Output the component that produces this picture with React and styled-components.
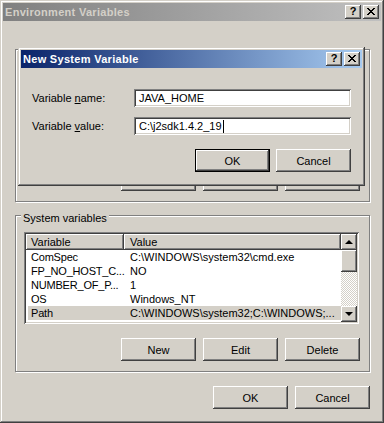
import React from "react";
import styled, { createGlobalStyle } from "styled-components";

const FONT = `"Liberation Sans", Arial, sans-serif`;
const FACE = "#d4d0c8";

const Global = createGlobalStyle`
  html, body { margin: 0; padding: 0; background: ${FACE}; }
  body { font-family: ${FONT}; font-size: 11px; color: #000; }
  * { box-sizing: border-box; }
`;

const raised = `box-shadow: inset -1px -1px #404040, inset 1px 1px #fff, inset -2px -2px #808080, inset 2px 2px ${FACE};`;
const sunken = `box-shadow: inset 1px 1px #808080, inset -1px -1px #fff, inset 2px 2px #404040, inset -2px -2px ${FACE};`;
const frame = `box-shadow: inset -1px -1px #404040, inset 1px 1px ${FACE}, inset -2px -2px #808080, inset 2px 2px #fff;`;

const Window = styled.div`
  position: relative;
  width: 384px;
  height: 423px;
  padding: 3px;
  background: ${FACE};
  ${frame}
  display: flex;
  flex-direction: column;
`;

const Dialog = styled.div`
  position: absolute;
  left: 18px;
  top: 47px;
  width: 347px;
  height: 139px;
  padding: 3px;
  background: ${FACE};
  ${frame}
  display: flex;
  flex-direction: column;
  z-index: 2;
`;

const TitleBar = styled.div`
  height: 18px;
  flex: none;
  display: flex;
  align-items: center;
  justify-content: space-between;
  padding: 0 2px 0 2px;
  background: ${(p) =>
    p.$active
      ? "linear-gradient(to right, #0a246a, #a6caf0)"
      : "linear-gradient(to right, #808080, #c0c0c0)"};
`;

const TitleText = styled.span`
  font-family: ${FONT};
  font-weight: bold;
  font-size: 11px;
  letter-spacing: 0.3px;
  color: ${(p) => (p.$active ? "#fff" : FACE)};
  white-space: nowrap;
`;

const CaptionGroup = styled.div`
  display: flex;
  gap: 2px;
`;

const CaptionBtn = styled.div`
  width: 16px;
  height: 14px;
  background: ${FACE};
  ${raised}
  display: flex;
  align-items: center;
  justify-content: center;
  font-family: ${FONT};
  font-weight: bold;
  font-size: 11px;
  line-height: 1;
  color: #000;
  padding-bottom: 1px;
`;

const CloseGlyph = () => (
  <svg width="8" height="7" viewBox="0 0 8 7" shapeRendering="crispEdges">
    <path d="M0 0h2l2 2.4 2-2.4h2L5 3.5 8 7H6L4 4.6 2 7H0l3-3.5z" fill="#000" />
  </svg>
);

const Caption = ({ title, active }) => (
  <TitleBar $active={active}>
    <TitleText $active={active}>{title}</TitleText>
    <CaptionGroup>
      <CaptionBtn>?</CaptionBtn>
      <CaptionBtn>
        <CloseGlyph />
      </CaptionBtn>
    </CaptionGroup>
  </TitleBar>
);

const Body = styled.div`
  flex: 1;
  display: flex;
  flex-direction: column;
  padding: 0 11px 0 12px;
`;

const Group = styled.div`
  position: relative;
  margin-top: ${(p) => p.$mt}px;
  height: ${(p) => p.$h}px;
  border: 1px solid #808080;
  box-shadow: inset 1px 1px #fff, 1px 1px #fff;
  display: flex;
  flex-direction: column;
  padding: 16px 9px 10px 8px;
`;

const Legend = styled.span`
  position: absolute;
  left: 5px;
  top: -4px;
  padding: 0 2px;
  background: ${FACE};
  line-height: 13px;
  white-space: nowrap;
`;

const ButtonRow = styled.div`
  display: flex;
  justify-content: flex-end;
  gap: ${(p) => p.$gap || 7}px;
  margin-top: ${(p) => (p.$mt != null ? `${p.$mt}px` : "auto")};
`;

const Button = styled.div`
  width: 75px;
  height: 23px;
  display: flex;
  align-items: center;
  justify-content: center;
  background: ${FACE};
  font-family: ${FONT};
  font-size: 11px;
  ${(p) =>
    p.$default
      ? `border: 1px solid #000; ${raised}`
      : raised}
`;

const ListView = styled.div`
  width: 335px;
  height: 92px;
  flex: none;
  padding: 2px;
  background: #fff;
  ${sunken}
  display: flex;
`;

const ListBody = styled.div`
  flex: 1;
  display: flex;
  flex-direction: column;
  overflow: hidden;
`;

const HeaderRow = styled.div`
  display: flex;
  height: 16px;
  flex: none;
`;

const HeaderCell = styled.div`
  width: ${(p) => (p.$w ? `${p.$w}px` : "auto")};
  flex: ${(p) => (p.$w ? "none" : "1")};
  background: ${FACE};
  box-shadow: inset -1px -1px #404040, inset 1px 1px #fff, inset -2px -2px #808080;
  padding-left: ${(p) => p.$pl}px;
  display: flex;
  align-items: center;
  white-space: nowrap;
`;

const Row = styled.div`
  display: flex;
  height: 14px;
  align-items: center;
  margin-left: 2px;
  background: ${(p) => (p.$selected ? FACE : "transparent")};
  white-space: nowrap;
`;

const Cell = styled.div`
  width: ${(p) => (p.$w ? `${p.$w}px` : "auto")};
  flex: ${(p) => (p.$w ? "none" : "1")};
  padding-left: ${(p) => p.$pl}px;
  overflow: ${(p) => (p.$w ? "visible" : "hidden")};
  letter-spacing: ${(p) => (p.$w ? "-0.2px" : "0")};
`;

const ScrollBar = styled.div`
  width: 16px;
  flex: none;
  display: flex;
  flex-direction: column;
`;

const ScrollBtn = styled.div`
  width: 16px;
  height: ${(p) => p.$h || 16}px;
  flex: none;
  background: ${FACE};
  ${raised}
  display: flex;
  align-items: center;
  justify-content: center;
`;

const Arrow = styled.span`
  width: 0;
  height: 0;
  border-left: 4px solid transparent;
  border-right: 4px solid transparent;
  ${(p) =>
    p.$up ? "border-bottom: 4px solid #000;" : "border-top: 4px solid #000;"}
`;

const Track = styled.div`
  flex: 1;
  background: repeating-conic-gradient(${FACE} 0 25%, #fff 0 50%) 0 0 / 2px 2px;
`;

const FieldRow = styled.div`
  display: flex;
  align-items: center;
  height: 18px;
  margin-top: ${(p) => p.$mt}px;
`;

const Label = styled.label`
  width: 102px;
  flex: none;
  white-space: nowrap;
`;

const U = styled.span`
  text-decoration: underline;
`;

const TextBox = styled.div`
  width: 217px;
  height: 18px;
  background: #fff;
  ${sunken}
  padding: 0 4px 0 5px;
  display: flex;
  align-items: center;
  white-space: nowrap;
`;

const Caret = styled.span`
  display: inline-block;
  width: 1px;
  height: 13px;
  background: #000;
  margin-left: 1px;
`;

const DialogBody = styled.div`
  flex: 1;
  display: flex;
  flex-direction: column;
  padding: 21px 11px 0 11px;
`;

const rows = [
  ["ComSpec", "C:\\WINDOWS\\system32\\cmd.exe"],
  ["FP_NO_HOST_C...", "NO"],
  ["NUMBER_OF_P...", "1"],
  ["OS", "Windows_NT"],
  ["Path", "C:\\WINDOWS\\system32;C:\\WINDOWS;...", true],
];

export default function App() {
  return (
    <>
      <Global />
      <Window>
        <Caption title="Environment Variables" />
        <Body>
          <Group $mt={28} $h={153}>
            <Legend>User variables for Administrator</Legend>
            <ButtonRow>
              <Button>New</Button>
              <Button>Edit</Button>
              <Button>Delete</Button>
            </ButtonRow>
          </Group>
          <Group $mt={13} $h={157}>
            <Legend>System variables</Legend>
            <ListView>
              <ListBody>
                <HeaderRow>
                  <HeaderCell $w={98} $pl={5}>Variable</HeaderCell>
                  <HeaderCell $pl={6}>Value</HeaderCell>
                </HeaderRow>
                {rows.map(([name, value, sel]) => (
                  <Row key={name} $selected={sel}>
                    <Cell $w={96} $pl={3}>{name}</Cell>
                    <Cell $pl={6}>{value}</Cell>
                  </Row>
                ))}
              </ListBody>
              <ScrollBar>
                <ScrollBtn>
                  <Arrow $up />
                </ScrollBtn>
                <ScrollBtn $h={22} />
                <Track />
                <ScrollBtn>
                  <Arrow />
                </ScrollBtn>
              </ScrollBar>
            </ListView>
            <ButtonRow>
              <Button>New</Button>
              <Button>Edit</Button>
              <Button>Delete</Button>
            </ButtonRow>
          </Group>
          <ButtonRow $mt={14}>
            <Button>OK</Button>
            <Button>Cancel</Button>
          </ButtonRow>
        </Body>
        <Dialog>
          <Caption title="New System Variable" active />
          <DialogBody>
            <FieldRow $mt={0}>
              <Label>
                Variable <U>n</U>ame:
              </Label>
              <TextBox>JAVA_HOME</TextBox>
            </FieldRow>
            <FieldRow $mt={10}>
              <Label>
                Variable <U>v</U>alue:
              </Label>
              <TextBox>
                C:\j2sdk1.4.2_19
                <Caret />
              </TextBox>
            </FieldRow>
            <ButtonRow $mt={14} $gap={6}>
              <Button $default>OK</Button>
              <Button>Cancel</Button>
            </ButtonRow>
          </DialogBody>
        </Dialog>
      </Window>
    </>
  );
}
